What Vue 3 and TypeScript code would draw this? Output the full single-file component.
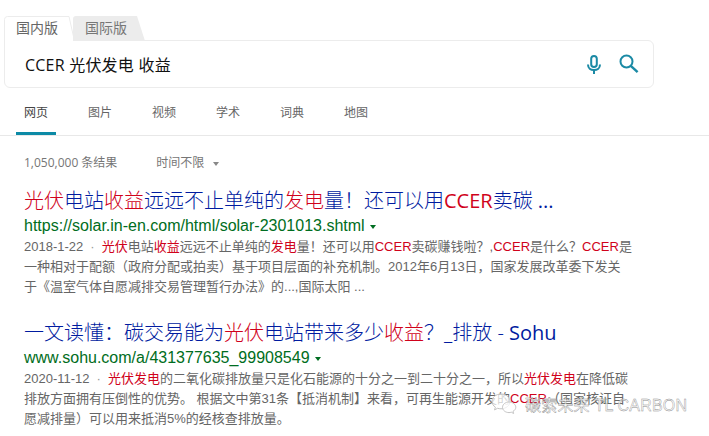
<template>
  <div class="page">
    <!-- 搜索框 -->
    <div class="tabs">
      <div class="tab active">
        <svg class="tab-shape" width="72" height="26" viewBox="0 0 72 26" fill="#fff" stroke="#ececec">
          <path d="M.5 26V3.500Q.5.5 3.500.5H65L70.500 25" />
        </svg>
        <span class="tab-label">国内版</span>
      </div>
      <div class="tab">国际版</div>
    </div>
    <div class="search-box">
      <span class="query">CCER 光伏发电 收益</span>
      <svg class="mic" width="14" height="20" viewBox="0 0 14 20" fill="none" stroke="#1b8aa5" stroke-width="2">
        <rect x="4.200" y="1" width="5.600" height="11" rx="2.800" />
        <path d="M1 9.500c0 3.600 2.600 5.600 6 5.600s6-2 6-5.600" />
        <path d="M7 15v4" />
      </svg>
      <svg class="search-icon" width="20" height="20" viewBox="0 0 20 20" fill="none" stroke="#1b8aa5">
        <circle cx="7.500" cy="7.500" r="6" stroke-width="2" />
        <path d="M11.800 11.800l6.800 6.400" stroke-width="2.400" />
      </svg>
    </div>

    <!-- 导航 -->
    <nav class="nav">
      <div v-for="(item, i) in navItems" :key="item" class="nav-item" :class="{ active: i === 0 }">{{ item }}</div>
    </nav>

    <!-- 结果统计 -->
    <div class="stats">
      <span class="count">1,050,000 条结果</span>
      <span class="filter">时间不限<i class="caret"></i></span>
    </div>

    <!-- 结果列表 -->
    <div v-for="r in results" :key="r.url" class="result">
      <div class="title">
        <span v-for="(s, i) in parse(r.title)" :key="i" :class="{ hit: s.hit, latin: s.latin }">{{ s.text }}</span>
      </div>
      <div class="url">{{ r.url }}<i class="url-caret"></i></div>
      <div class="snippet">
        <span>{{ r.date }}</span><span class="dot">·</span>
        <span v-for="(s, i) in parse(r.text)" :key="i" :class="{ hit: s.hit }">{{ s.text }}</span>
      </div>
    </div>

    <!-- 水印 -->
    <div class="watermark">
      <svg width="26" height="24" viewBox="0 0 26 24" fill="rgba(255,255,255,.7)" stroke="#c4c4c4" stroke-width="1">
        <path d="M10 2C5 2 1 5.300 1 9.400c0 2.400 1.300 4.400 3.400 5.800l-.9 2.700 3.100-1.600c1.100.3 2.200.5 3.400.5 5 0 9-3.300 9-7.400S15 2 10 2z" />
        <path d="M18 10c-3.600 0-6.500 2.400-6.500 5.300s2.900 5.300 6.500 5.300c.8 0 1.600-.1 2.300-.4l2.300 1.300-.6-2.100c1.700-1 2.800-2.500 2.800-4.100 0-2.900-2.900-5.300-6.800-5.300z" />
      </svg>
      <span class="mark-text">碳索未来 TL CARBON</span>
    </div>
  </div>
</template>

<script setup lang="ts">
interface Segment {
  text: string
  hit: boolean
  latin: boolean
}

interface Result {
  title: string
  url: string
  date: string
  text: string
}

const navItems = ['网页', '图片', '视频', '学术', '词典', '地图']

// [] 里的文字是命中关键词
const results: Result[] = [
  {
    title: '[光伏]电站[收益]远远不止单纯的[发电]量！还可以用[CCER]卖碳 ...',
    url: 'https://solar.in-en.com/html/solar-2301013.shtml',
    date: '2018-1-22',
    text: '[光伏]电站[收益]远远不止单纯的[发电]量！还可以用[CCER]卖碳赚钱啦？,[CCER]是什么？[CCER]是一种相对于配额（政府分配或拍卖）基于项目层面的补充机制。2012年6月13日，国家发展改革委下发关于《温室气体自愿减排交易管理暂行办法》的...,国际太阳 ...',
  },
  {
    title: '一文读懂：碳交易能为[光伏]电站带来多少[收益]？_排放 - Sohu',
    url: 'www.sohu.com/a/431377635_99908549',
    date: '2020-11-12',
    text: '[光伏发电]的二氧化碳排放量只是化石能源的十分之一到二十分之一，所以[光伏发电]在降低碳排放方面拥有压倒性的优势。 根据文中第31条【抵消机制】来看，可再生能源开发的[CCER]（国家核证自愿减排量）可以用来抵消5%的经核查排放量。',
  },
]

// 拆出关键词和西文片段
const parse = (raw: string): Segment[] =>
  raw
    .split(/(\[[^\]]+\]|[A-Za-z. ]{2,})/)
    .filter(Boolean)
    .map(part => {
      const hit = part.startsWith('[')
      const text = hit ? part.slice(1, -1) : part
      return { text, hit, latin: /^[A-Za-z. ]+$/.test(text) }
    })
</script>

<style scoped>
.page {
  position: relative;
  width: 709px;
  height: 436px;
  overflow: hidden;
  background: #fff;
  padding-top: 16px;
  box-sizing: border-box;
  font-family: "Liberation Sans", "Noto Sans CJK SC", sans-serif;
}

.tabs {
  display: flex;
  padding-left: 4px;
  height: 25px;
  position: relative;
  z-index: 1;
}

.tab {
  width: 72px;
  height: 25px;
  line-height: 24px;
  box-sizing: border-box;
  padding-left: 12px;
  font-size: 14px;
  color: #777;
  background: #ececec;
  clip-path: polygon(0 0, 64px 0, 72px 100%, 0 100%);
  border-radius: 3px 0 0 0;
}

.tab.active {
  position: relative;
  width: 69px;
  background: none;
  clip-path: none;
  color: #666;
}

.tab-shape {
  position: absolute;
  left: 0;
  top: 0;
}

.tab-label {
  position: relative;
}

.search-box {
  margin-left: 4px;
  width: 650px;
  height: 48px;
  margin-top: -1px;
  box-sizing: border-box;
  border: 1px solid #ececec;
  border-radius: 0 6px 6px 6px;
  display: flex;
  align-items: center;
  padding-left: 20px;
  padding-bottom: 1px;
}

.query {
  flex: 1;
  font-family: "Open Sans", "Noto Sans CJK SC", sans-serif;
  font-size: 16px;
  letter-spacing: 0.22px;
  color: #111;
}

.mic {
  margin-right: 18px;
  margin-top: 3px;
}

.search-icon {
  margin-right: 14px;
}

.nav {
  display: flex;
  gap: 24px;
  padding-left: 16px;
  height: 47px;
  border-bottom: 1px solid #e8e8e8;
  box-sizing: content-box;
}

.nav-item {
  width: 40px;
  text-align: center;
  font-size: 12px;
  line-height: 50px;
  color: #666;
  box-sizing: border-box;
}

.nav-item.active {
  color: #444;
  border-bottom: 3px solid #0c8aa6;
}

.stats {
  display: flex;
  padding-left: 24px;
  margin-top: 18px;
  height: 18px;
  line-height: 18px;
  font-size: 12px;
  color: #767676;
  font-family: "Open Sans", "Noto Sans CJK SC", sans-serif;
}

.filter {
  margin-left: 39px;
  display: flex;
  align-items: center;
}

.caret {
  margin-left: 9px;
  margin-top: 1px;
  border-left: 3.500px solid transparent;
  border-right: 3.500px solid transparent;
  border-top: 4px solid #888;
}

.result {
  padding-left: 24px;
  width: 608px;
  margin-top: 15px;
}

.result + .result {
  margin-top: 22px;
}

.title {
  font-family: "Open Sans", "Noto Sans CJK SC", sans-serif;
  font-size: 20px;
  font-weight: 300;
  line-height: 28px;
  color: #001ba0;
  white-space: nowrap;
}

.title .latin {
  font-weight: 400;
}

.hit {
  color: #d0021b;
}

.url {
  font-size: 16px;
  line-height: 20px;
  margin-top: 1px;
  color: #006d21;
  white-space: nowrap;
  display: flex;
  align-items: center;
}

.url-caret {
  margin-left: 5px;
  margin-top: 2px;
  border-left: 3.500px solid transparent;
  border-right: 3.500px solid transparent;
  border-top: 4px solid #006d21;
}

.snippet {
  font-size: 13px;
  line-height: 20px;
  color: #666;
  margin-top: 1px;
}

.dot {
  margin: 0 7px;
  color: #999;
}

.watermark {
  position: absolute;
  left: 491px;
  top: 392px;
  display: flex;
  align-items: center;
  gap: 8px;
}

.mark-text {
  font-size: 16px;
  color: rgba(255, 255, 255, 0.75);
  letter-spacing: 0.2px;
  -webkit-text-stroke: 0.4px #8c8c8c;
  white-space: nowrap;
}
</style>
